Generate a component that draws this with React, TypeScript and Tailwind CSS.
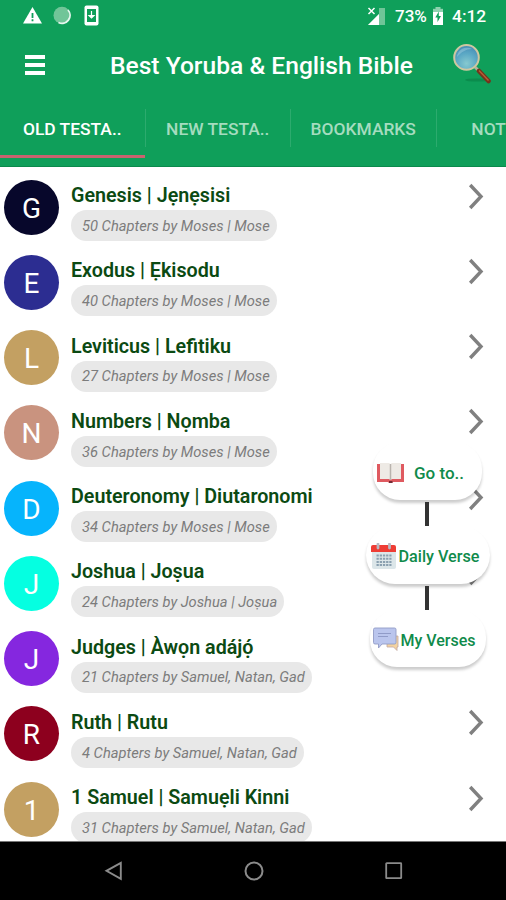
import { useState } from 'react'

function App() {
  const [tab, setTab] = useState<number>(0)

  return (
    <div className="relative flex h-[900px] w-[506px] flex-col overflow-hidden bg-white font-['Roboto',sans-serif]">
      <header className="h-[167px] shrink-0 border-b border-[#0a8a4c] bg-[#0f9f5a] text-white">
        <StatusBar />

        <div className="flex h-[69px] items-center">
          <button className="ml-[25px] flex w-[20px] flex-col gap-[4px]">
            <span className="h-[4px] bg-white" />
            <span className="h-[4px] bg-white" />
            <span className="h-[4px] bg-white" />
          </button>
          <h1 className="ml-[65px] w-[306px] whitespace-nowrap pt-[2px] text-[24.6px] font-medium leading-[30px]">Best Yoruba &amp; English Bible</h1>
          <Magnifier />
        </div>

        <nav className="flex h-[67px] w-[582px] pt-[10px]">
          {tabs.map((name, i) => (
            <button key={name} onClick={() => setTab(i)} className="relative flex h-full w-[145.5px] shrink-0 justify-center">
              <span className={`block whitespace-nowrap pt-[3px] text-[17.4px] font-medium leading-[34px] ${tab === i ? 'text-white' : 'text-[#a5dcbf]'} ${i === 3 ? 'mr-[21px]' : 'mr-px'}`}>{name}</span>
              {i < 3 && <span className="absolute right-0 top-0 h-[38px] w-px bg-[#2cab6e]" />}
              {tab === i && <span className="absolute bottom-[8px] left-0 h-[3px] w-[145px] bg-[#c9636f]" />}
            </button>
          ))}
        </nav>
      </header>

      <main className="min-h-0 flex-1 overflow-hidden pt-[3px]">
        {books.map(book => (
          <div key={book.name} className="flex h-[75.25px]">
            <div className={`ml-[4px] mt-[9.5px] flex size-[55px] shrink-0 items-center justify-center rounded-full pt-[3px] text-[28px] leading-none text-white ${book.color}`}>
              {book.name[0]}
            </div>
            <div className="ml-[12px] flex-1 pt-[14px]">
              <h2 className="whitespace-nowrap text-[19.7px] font-semibold leading-[24px] text-[#0b4a12]">{book.name}</h2>
              <span className="mt-[2px] inline-flex h-[31px] items-center whitespace-nowrap rounded-full bg-[#e8e8e8] pl-[11px] pr-[7px] pt-[1px] text-[14.7px] italic text-[#7c7c7c]">
                {book.info}
              </span>
            </div>
            <svg className="mr-[21px] mt-[12.5px] h-[27px] w-[17px]" viewBox="0 0 17 27" fill="none" stroke="#808080" strokeWidth="3.4">
              <path d="M2.2 2 13 13.5 2.2 25" />
            </svg>
          </div>
        ))}
      </main>

      <footer className="flex h-[59px] shrink-0 items-center border-t border-[#777] bg-black">
        <svg className="ml-[103px] size-5" viewBox="0 0 20 20" fill="none" stroke="#8b8b8b" strokeWidth="1.9">
          <path d="M17.8 1.8v16L3.5 9.8z" />
        </svg>
        <svg className="ml-[121px] size-5" viewBox="0 0 20 20" fill="none" stroke="#8b8b8b" strokeWidth="2">
          <circle cx="10" cy="10" r="8.5" />
        </svg>
        <svg className="ml-[120px] size-5" viewBox="0 0 20 20" fill="none" stroke="#8b8b8b" strokeWidth="1.8">
          <rect x="2.2" y="2.2" width="15" height="15" rx="0.5" />
        </svg>
      </footer>

      {/* floating shortcuts */}
      <div className="absolute left-[364px] top-[442px] flex w-[127px] flex-col items-center text-[16.2px] font-medium text-[#108b4b]">
        <button className="flex h-[58px] w-[109px] items-center whitespace-nowrap rounded-[27px] bg-white pl-[4px] pt-[3px] shadow-[0_3px_3px_rgba(0,0,0,0.2)]">
          <BookIcon />
          <span className="ml-[9px] pt-[2px] text-[17px]">Go to..</span>
        </button>
        <span className="mr-[2px] mt-[2px] h-[24px] w-[4px] bg-[#333]" />
        <button className="flex h-[58px] w-[124px] items-center whitespace-nowrap rounded-[29px] bg-white pl-[5px] shadow-[0_3px_3px_rgba(0,0,0,0.2)]">
          <CalendarIcon />
          <span className="ml-[2px] pt-[4px]">Daily Verse</span>
        </button>
        <span className="mr-[2px] mt-[2px] h-[24px] w-[4px] bg-[#333]" />
        <button className="flex h-[57px] w-[116px] items-center whitespace-nowrap rounded-[27px] bg-white pl-[3px] shadow-[0_3px_3px_rgba(0,0,0,0.2)]">
          <ChatIcon />
          <span className="pt-[5px] text-[16px]">My Verses</span>
        </button>
      </div>
    </div>
  )
}

function StatusBar() {
  return (
    <div className="flex h-[30px] items-start pt-[5px]">
      <svg className="ml-[22px] h-[22px] w-[80px]" viewBox="0 0 80 22">
        <path d="M10.5 2 20 18.5H1z" fill="#fff" />
        <path d="M10.5 8v5M10.5 14.3v2" stroke="#0f9f5a" strokeWidth="1.8" />
        <circle cx="40" cy="10.3" r="8.5" fill="#70c598" />
        <path d="M46 5a8 8 0 0 1-9.500 12.500" fill="none" stroke="#e6f6ee" strokeWidth="1.8" />
        <rect x="62.5" y="0.5" width="14" height="20" rx="2" fill="#fff" />
        <rect x="65" y="4" width="9" height="13" fill="#0f9f5a" />
        <path d="M69.5 6v6M67 10.5l2.500 2.500 2.500-2.500z" fill="#fff" stroke="#fff" strokeWidth="1.2" />
      </svg>
      <svg className="ml-[265px] h-[20px] w-[19px]" viewBox="0 0 19 20">
        <path d="M18 3v17H1z" fill="#6fc598" />
        <path d="M12 3h6v17h-6z" fill="#6fc598" />
        <path d="M12 9v11H1z" fill="#fff" />
        <path d="m1.500 3 6 6m0-6-6 6" stroke="#fff" strokeWidth="1.500" />
      </svg>
      <span className="ml-[9px] w-[32px] whitespace-nowrap text-[17px] font-medium leading-[22px]">73%</span>
      <svg className="ml-[5px] mt-[1px] h-[19px] w-[12px]" viewBox="0 0 12 19">
        <path d="M3.500 1h5v3h-5z" fill="#8ed2af" />
        <path d="M1 2.800h10V6H1z" fill="#8ed2af" />
        <path d="M1 6h10v13H1z" fill="#fff" />
        <path d="M6.800 5.500 3.300 11.500h2.200V16l3.500-6H6.800z" fill="#0f9f5a" />
      </svg>
      <span className="ml-[8px] whitespace-nowrap text-[17.4px] font-medium leading-[22px]">4:12</span>
    </div>
  )
}

function Magnifier() {
  return (
    <svg className="mb-[3px] ml-[36px] size-[42px]" viewBox="0 0 42 42">
      <defs>
        <radialGradient id="lens" cx="50%" cy="75%" r="75%">
          <stop offset="0" stopColor="#87c9cf" />
          <stop offset="0.55" stopColor="#5ba8c5" />
          <stop offset="1" stopColor="#4589b3" />
        </radialGradient>
      </defs>
      <ellipse cx="25" cy="38" rx="12" ry="1.600" fill="#0b8c4d" />
      <path d="m23 25 4 4" stroke="#b5b09b" strokeWidth="3" />
      <path d="m27 29 9.500 10" stroke="#74331c" strokeWidth="4.600" strokeLinecap="round" />
      <path d="m27 28.500 9.500 10" stroke="#b85e36" strokeWidth="1.400" />
      <circle cx="14.500" cy="15.400" r="12.300" fill="url(#lens)" stroke="#cfc7a1" strokeWidth="2" />
      <path d="M5 15a10 10 0 0 1 15-8C14 7 9 10 5 15z" fill="#a8d3e3" opacity=".45" />
    </svg>
  )
}

function BookIcon() {
  return (
    <svg className="h-[22px] w-[28px] shrink-0" viewBox="0 0 28 22">
      <path d="M0 2h27v18H16l-1 1h-3l-1-1H0z" fill="#df5a60" />
      <path d="M3 1h9l1.500 1L15 1h9v16h-9l-1.500 1-1.500-1H3z" fill="#eeeae5" />
      <path d="M13.500 2v16" stroke="#b9b3ad" strokeWidth="1.500" />
      <path d="M12 19h3.500v2H12z" fill="#742c35" />
    </svg>
  )
}

function CalendarIcon() {
  return (
    <svg className="mt-[2px] h-[27px] w-[26px] shrink-0" viewBox="0 0 26 27">
      <path d="M1 8h24v16a2 2 0 0 1-2 2H3a2 2 0 0 1-2-2z" fill="#dce6e9" />
      <path d="M0 9V4a2 2 0 0 1 2-2h21a2 2 0 0 1 2 2v5z" fill="#ee3d35" />
      <path d="M7 1v4M18.500 1v4" stroke="#b9b9c2" strokeWidth="2.800" strokeLinecap="round" />
      <path d="M5.500 12.500h15M5.500 15.700h15M5.500 18.900h15M5.500 22.100h15" stroke="#8aa0b0" strokeWidth="2" strokeDasharray="2.300 0.900" />
    </svg>
  )
}

function ChatIcon() {
  return (
    <svg className="mt-[1px] h-[26px] w-[28px] shrink-0" viewBox="0 0 28 26">
      <path d="M14 10h11v11h-1v3.500L20.500 21H14z" fill="#f4d3a0" stroke="#c0a6a3" strokeWidth="0.800" />
      <path d="M2 2h19.500A1.500 1.500 0 0 1 23 3.500v13a1.500 1.500 0 0 1-1.500 1.500H9l-3.500 4v-4H2a1.500 1.500 0 0 1-1.500-1.500v-13A1.500 1.500 0 0 1 2 2z" fill="#bac5ed" stroke="#929cc6" strokeWidth="0.900" />
      <path d="M5 7.500h13M5 10.500h10" stroke="#909bc8" strokeWidth="1.200" />
    </svg>
  )
}

export default App

const tabs = ['OLD TESTA..', 'NEW TESTA..', 'BOOKMARKS', 'NOTES']

const books = [
  { name: 'Genesis | Jẹnẹsisi', info: '50 Chapters by Moses | Mose', color: 'bg-[#07072b]' },
  { name: 'Exodus | Ẹkisodu', info: '40 Chapters by Moses | Mose', color: 'bg-[#2c2d91]' },
  { name: 'Leviticus | Lefitiku', info: '27 Chapters by Moses | Mose', color: 'bg-[#c3a062]' },
  { name: 'Numbers | Nọmba', info: '36 Chapters by Moses | Mose', color: 'bg-[#c9937f]' },
  { name: 'Deuteronomy | Diutaronomi', info: '34 Chapters by Moses | Mose', color: 'bg-[#06b4fc]' },
  { name: 'Joshua | Joṣua', info: '24 Chapters by Joshua | Joṣua', color: 'bg-[#05ffe1]' },
  { name: 'Judges | Àwọn adájọ́', info: '21 Chapters by Samuel, Natan, Gad', color: 'bg-[#8527df]' },
  { name: 'Ruth | Rutu', info: '4 Chapters by Samuel, Natan, Gad', color: 'bg-[#8d001e]' },
  { name: '1 Samuel | Samuẹli Kinni', info: '31 Chapters by Samuel, Natan, Gad', color: 'bg-[#c3a062]' },
]
